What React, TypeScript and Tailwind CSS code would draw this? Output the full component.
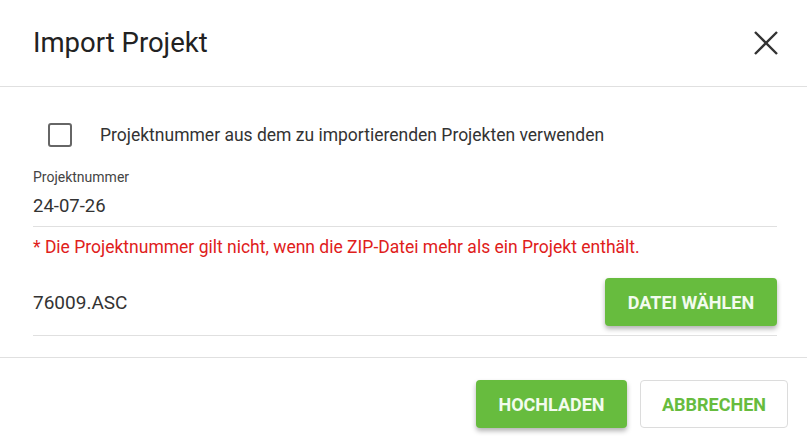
import { useState } from "react";

const font = { fontFamily: "Roboto, 'Liberation Sans', sans-serif" };

export default function App() {
  const [useNumber, setUseNumber] = useState(false);

  return (
    <div
      className="flex h-[448px] w-[807px] flex-col bg-white text-[#333]"
      style={font}
    >
      {/* Header */}
      <div className="flex h-[87px] shrink-0 items-center justify-between border-b border-[#e0e0e0] pr-[29px] pl-[33px]">
        <h2 className="text-[27.5px] leading-none text-[#222]">Import Projekt</h2>
        <button className="flex h-[24px] w-[24px] items-center justify-center">
          <svg width="24" height="24" viewBox="0 0 24 24">
            <path
              d="M1 1 L23 23 M23 1 L1 23"
              stroke="#333"
              strokeWidth="2.4"
              fill="none"
            />
          </svg>
        </button>
      </div>

      {/* Body */}
      <div className="flex flex-col pt-[24px] pr-[30px] pb-[21px] pl-[33px]">
        <label
          className="flex h-12 cursor-pointer items-center"
          onClick={() => setUseNumber(!useNumber)}
        >
          <span className="ml-[15px] h-[24px] w-[24px] rounded-[3px] border-[2.5px] border-[#666]" />
          <span className="ml-[28px] text-[17.5px] text-[#333]">
            Projektnummer aus dem zu importierenden Projekten verwenden
          </span>
        </label>

        <div className="mt-[10px] flex flex-col border-b border-[#e0e0e0] pb-[8px]">
          <span className="text-[14px] leading-4 text-[#444]">Projektnummer</span>
          <span className="mt-[9px] text-[18.5px] leading-6 text-[#333]">24-07-26</span>
        </div>

        <p className="mt-[10px] text-[17.5px] leading-5 text-[#e0201b]">
          * Die Projektnummer gilt nicht, wenn die ZIP-Datei mehr als ein Projekt enthält.
        </p>

        <div className="mt-[21px] flex items-center justify-between border-b border-[#e0e0e0] pb-[9px]">
          <span className="mt-[2px] text-[19px] text-[#333]">76009.ASC</span>
          <button className="h-[48px] w-[172px] rounded-[4px] bg-[#67bc3e] text-[18px] font-bold text-[#f2fbee] uppercase shadow-[0_3px_5px_rgba(0,0,0,0.3)]">
            Datei wählen
          </button>
        </div>
      </div>

      {/* Footer */}
      <div className="flex justify-end gap-[13px] border-t border-[#e0e0e0] pt-[22px] pr-[19px]">
        <button className="h-[48px] w-[151px] rounded-[4px] bg-[#67bc3e] text-[18px] font-bold text-[#f2fbee] uppercase shadow-[0_3px_5px_rgba(0,0,0,0.3)]">
          Hochladen
        </button>
        <button className="h-[48px] w-[148px] rounded-[4px] border border-[#dcdcdc] bg-white text-[18px] font-bold text-[#67bc3e] uppercase">
          Abbrechen
        </button>
      </div>
    </div>
  );
}
